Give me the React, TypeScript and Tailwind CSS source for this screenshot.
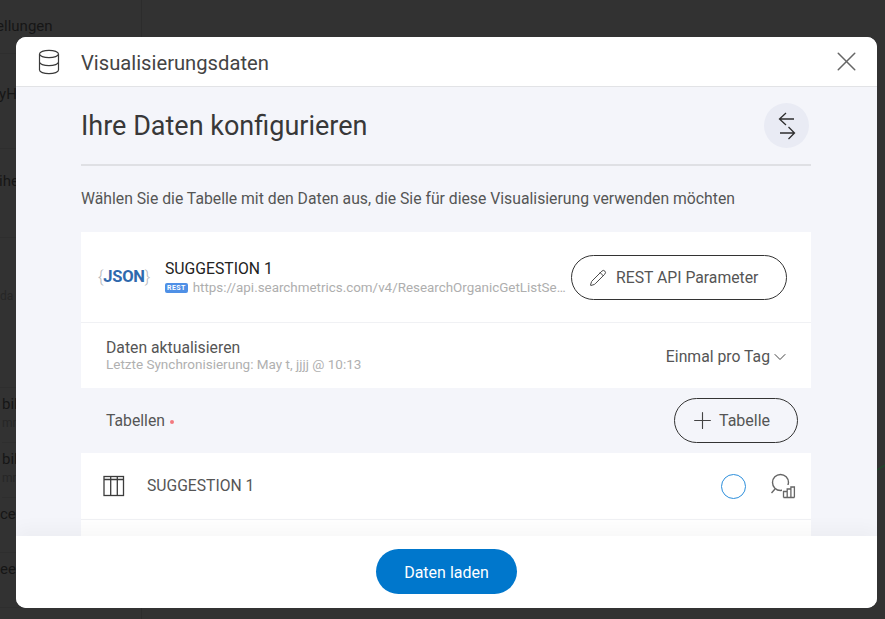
import { ChevronDown, Pencil, Plus, X } from 'lucide-react';

const font = { fontFamily: 'Roboto, sans-serif' };

const BG_ROWS = [
  { h: 'h-[54px]', title: 'Einstellungen', sub: '', pad: 'pt-[15px]', ml: 'ml-[-37px]' },
  { h: 'h-[95px]', title: 'MyH', sub: 'en', pad: 'pt-[29px]', ml: 'ml-[-14px]' },
  { h: 'h-[89px]', title: 'ihe', sub: '', pad: 'pt-[21px]', ml: 'ml-[-1px]' },
  { h: 'h-[150px]', title: '', sub: 'da', pad: 'pt-[50px]', ml: 'ml-[0px]' },
  { h: 'h-[55px]', title: 'bil', sub: 'mm', pad: 'pt-[5px]', ml: 'ml-[2px]' },
  { h: 'h-[55px]', title: 'bil', sub: 'mm', pad: 'pt-[5px]', ml: 'ml-[2px]' },
  { h: 'h-[55px]', title: 'ce', sub: '', pad: 'pt-[5px]', ml: 'ml-[0px]' },
  { h: 'h-[55px]', title: 'ee', sub: '', pad: 'pt-[5px]', ml: 'ml-[0px]' },
];

const DatabaseIcon = () => (
  <svg width="22" height="26" viewBox="0 0 22 26" fill="none" stroke="#3a3a3a" strokeWidth="1.2">
    <ellipse cx="11" cy="5" rx="9.500" ry="3.700" />
    <path d="M1.500 5v16c0 2 4.200 3.700 9.500 3.700s9.500-1.700 9.500-3.700V5" />
    <path d="M1.500 13c0 2 4.200 3.700 9.500 3.700s9.500-1.700 9.500-3.700" />
  </svg>
);

const TableIcon = () => (
  <svg width="22" height="22" viewBox="0 0 22 22" fill="none" stroke="#3c3c3c" strokeWidth="1.3">
    <rect x="1" y="1.500" width="19.500" height="19" />
    <path d="M1 4.500h19.500M7.700 1.500v19M14.300 1.500v19" />
  </svg>
);

const SearchChartIcon = () => (
  <svg width="26" height="26" viewBox="0 0 26 26" fill="none" stroke="#666" strokeWidth="1.4">
    <circle cx="10.500" cy="9.500" r="8" />
    <path d="M5 16l-3.500 4" />
    <path fill="#fff" stroke="none" d="M12 12h13v13H12z" />
    <path d="M13.500 24.500v-6h3.700v6M17.200 24.500v-8.500h3.700v8.500M20.900 24.500v-10.500h3.500v10.500M13.500 24.500h10.900" strokeWidth="1.300" />
  </svg>
);

const SwapIcon = () => (
  <svg width="18" height="28" viewBox="0 0 18 28" fill="none" stroke="#2e2e2e" strokeWidth="1.300">
    <path d="M16 7H1.500M8 1L1.500 7 8 13" />
    <path d="M2 21h14.500M10.500 15l6 6-6 6" />
  </svg>
);

export default function App() {
  return (
    <div className="relative h-[619px] w-[885px] overflow-hidden bg-[#323232]" style={font}>
      <div className="flex h-full w-[142px] flex-col border-r border-[#2c2c2c] text-[15px] text-[#161616]">
        {BG_ROWS.map((row, i) => (
          <div key={i} className={`${row.h} ${row.pad} ${row.ml} whitespace-nowrap border-b border-[#2e2e2e] leading-[22px]`}>
            <div>{row.title}</div>
            <div className="text-[12px] leading-[16px] text-[#262626]">{row.sub}</div>
          </div>
        ))}
      </div>

      <svg className="absolute left-[877px] top-[463px]" width="8" height="8" viewBox="0 0 8 8" fill="none" stroke="#1f4a2c" strokeWidth="1.200">
        <path d="M0 7L8 2" />
      </svg>

      <div className="absolute left-[16px] top-[37px] flex h-[571px] w-[861px] flex-col overflow-hidden rounded-[10px] bg-[#f4f5fa]">
        <header className="flex h-[50px] shrink-0 items-center border-b border-[#e2e3e6] bg-white pl-[22px] pr-[14px]">
          <DatabaseIcon />
          <span className="ml-[21px] mt-[4px] text-[20.200px] text-[#444]">Visualisierungsdaten</span>
          <X size={33} strokeWidth={1.100} className="ml-auto text-[#666]" />
        </header>

        <div className="min-h-0 flex-1 overflow-hidden pl-[65px] pr-[66px]">
          <div className="flex h-[79px] items-center justify-between border-b-2 border-[#dfe0e4] pr-[2px]">
            <h1 className="pt-[2px] text-[27px] text-[#383838]">Ihre Daten konfigurieren</h1>
            <div className="flex h-[45px] w-[45px] items-center justify-center rounded-full bg-[#e9ebf4]">
              <SwapIcon />
            </div>
          </div>
          <p className="flex h-[66px] items-center text-[15.750px] text-[#555]">
            Wählen Sie die Tabelle mit den Daten aus, die Sie für diese Visualisierung verwenden möchten
          </p>

          <section className="bg-white">
            <div className="flex h-[91px] items-center border-b border-[#f0f1f4] pl-[18px] pr-[24px]">
              <div className="flex w-[50px] items-center justify-center text-[16.500px] font-bold tracking-[-0.2px] text-[#2f69ad]">
                <span className="font-light text-[#b5b8bd]">{'{'}</span>JSON<span className="font-light text-[#b5b8bd]">{'}'}</span>
              </div>
              <div className="ml-[16px] w-[405px] min-w-0 pt-[1px]">
                <div className="text-[15.750px] leading-[20px] text-[#222]">SUGGESTION 1</div>
                <div className="mt-[1px] flex items-center leading-[16px]">
                  <span className="mr-[5px] rounded-[2px] bg-[#4f90e6] px-[2px] text-[7px] font-bold leading-[10px] tracking-[0.4px] text-white">REST</span>
                  <span className="truncate text-[13.400px] text-[#aeaeae]">https://api.searchmetrics.com/v4/ResearchOrganicGetListSeoVisibility</span>
                </div>
              </div>
              <button className="ml-auto flex h-[45px] w-[216px] items-center rounded-full border border-[#333] pl-[17px] pt-[1px] text-[15.750px] text-[#555]">
                <Pencil size={18} strokeWidth={1.300} className="mr-[9px] text-[#444]" />
                REST API Parameter
              </button>
            </div>
            <div className="flex h-[65px] items-center justify-between pl-[25px] pr-[21px]">
              <div>
                <div className="text-[15.750px] leading-[18px] text-[#555]">Daten aktualisieren</div>
                <div className="text-[13.500px] leading-[15px] text-[#b0b0b0]">Letzte Synchronisierung: May t, jjjj @ 10:13</div>
              </div>
              <div className="flex items-center pt-[3px] text-[15.750px] text-[#555]">
                Einmal pro Tag
                <ChevronDown size={20} strokeWidth={1.200} className="text-[#444]" />
              </div>
            </div>
          </section>

          <div className="flex h-[65px] items-center justify-between pl-[25px] pr-[13px]">
            <div className="flex items-center pt-[1px] text-[15.750px] text-[#555]">
              Tabellen
              <span className="ml-[5px] mt-[2px] h-[4px] w-[4px] rounded-full bg-[#f2797f]" />
            </div>
            <button className="flex h-[45px] w-[124px] items-center rounded-full border border-[#333] pl-[14px] text-[16px] text-[#555]">
              <Plus size={27} strokeWidth={1} className="mr-[3px] text-[#444]" />
              Tabelle
            </button>
          </div>

          <section className="bg-white">
            <div className="flex h-[67px] items-center border-b border-[#f0f1f4] pl-[22px] pr-[15px]">
              <TableIcon />
              <span className="ml-[22px] text-[15.700px] text-[#555]">SUGGESTION 1</span>
              <span className="ml-auto h-[25px] w-[25px] rounded-full border-[1.500px] border-[#2d8fdc]" />
              <span className="ml-[24px]"><SearchChartIcon /></span>
            </div>
            <div className="h-[20px]" />
          </section>
        </div>

        <footer className="relative flex h-[72px] shrink-0 items-start justify-center bg-white pt-[13px] shadow-[0_-8px_16px_rgba(0,0,0,0.03)]">
          <button className="h-[45px] w-[141px] rounded-full bg-[#0077cc] pt-[2px] text-[16px] text-white">Daten laden</button>
        </footer>
      </div>
    </div>
  );
}
